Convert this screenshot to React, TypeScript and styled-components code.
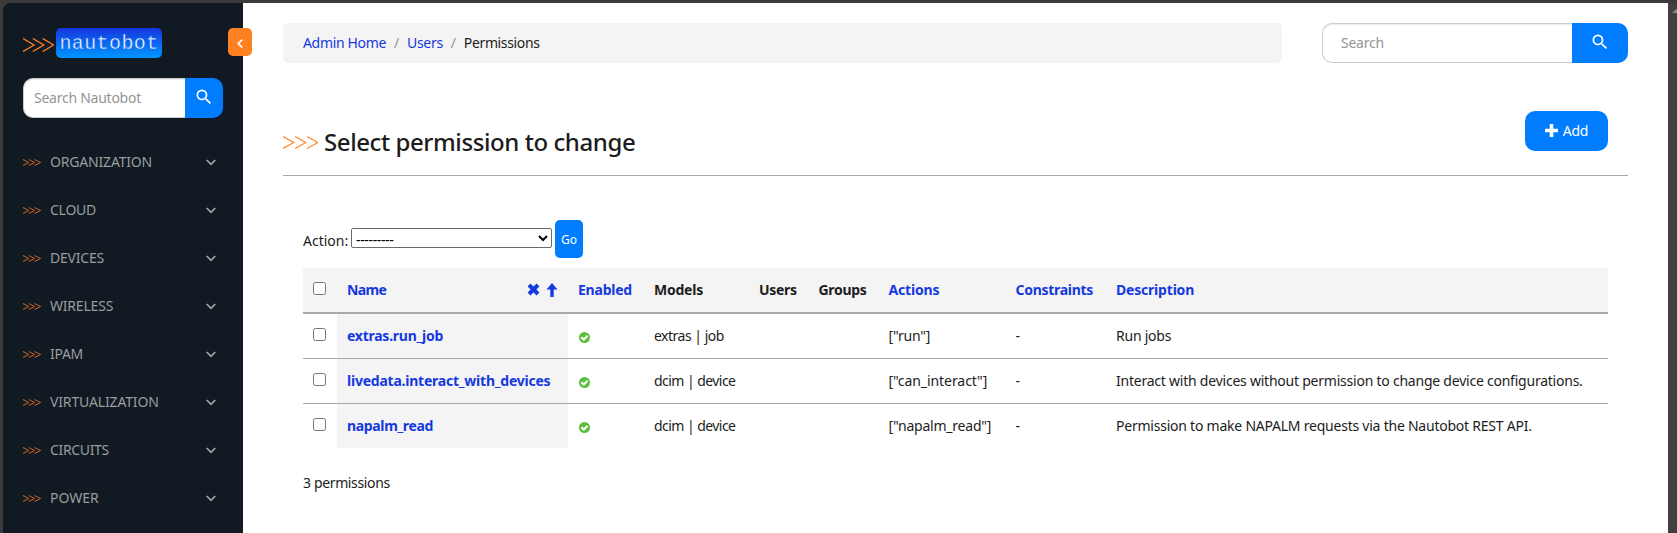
import React from "react";
import styled, { createGlobalStyle } from "styled-components";

const Global = createGlobalStyle`
  * { box-sizing: border-box; }
  body { margin: 0; background: #3b3b3b; overflow: hidden; }
  body, input, select, button { font-family: "Noto Sans", "Liberation Sans", sans-serif; font-size: 14px; }
`;

const BLUE = "#007dff";
const LINK = "#1539e0";
const ORANGE = "#ff8021";
const LINE = "#a9a9a9";

const Window = styled.div`
  display: flex;
  width: 1677px;
  height: 533px;
  padding: 3px 0 0 3px;
  background: #3b3b3b;
  color: #1c1c1c;
  line-height: 20px;
`;

const T = styled.span<{ $ls?: number }>`
  letter-spacing: ${(p) => p.$ls ?? -0.2}px;
  white-space: nowrap;
`;

const Sidebar = styled.aside`
  position: relative;
  flex: none;
  width: 240px;
  padding: 25px 20px 0;
  background: #111923;
  border-top-left-radius: 8px;
`;

const Logo = styled.div`
  display: flex;
  align-items: center;
  height: 30px;
  gap: 2px;
  margin-bottom: 20px;
`;

const LogoName = styled.span`
  width: 106px;
  height: 30px;
  padding-top: 1px;
  border-radius: 5px;
  background: linear-gradient(#1635de, #0097ff);
  color: #eef5ff;
  font: 20px/30px "Liberation Mono", monospace;
  letter-spacing: 0.4px;
  text-align: center;
  -webkit-text-stroke: 0.35px #0a68f0;
`;

const Collapse = styled.button`
  position: absolute;
  left: 225px;
  top: 25px;
  width: 24px;
  height: 28px;
  padding: 2px 0 0;
  border: 0;
  border-radius: 5px;
  background: ${ORANGE};
  display: flex;
  align-items: center;
  justify-content: center;
`;

const SearchForm = styled.form<{ $width: number }>`
  display: flex;
  flex: none;
  width: ${(p) => p.$width}px;
  height: 40px;
`;

const SearchInput = styled.input<{ $indent: number }>`
  flex: 1;
  min-width: 0;
  padding: 0 0 1px ${(p) => p.$indent}px;
  border: 1px solid #ccc;
  border-right: 0;
  border-radius: 10px 0 0 10px;
  box-shadow: inset 0 1px 1px rgba(0, 0, 0, 0.075);
  background: #fff;
  outline: 0;
  letter-spacing: -0.25px;
  &::placeholder { color: #949494; opacity: 1; }
`;

const SearchButton = styled.button<{ $width: number }>`
  display: flex;
  align-items: center;
  justify-content: center;
  width: ${(p) => p.$width}px;
  padding: 0 0 2px;
  border: 0;
  border-radius: 0 10px 10px 0;
  background: ${BLUE};
`;

const Nav = styled.nav`
  margin-top: 20px;
`;

const NavItem = styled.div`
  display: flex;
  align-items: center;
  height: 48px;
  padding-right: 7px;
  color: #9b9c9d;
`;

const NavLabel = styled(T)`
  flex: 1;
  margin-left: 9px;
`;

const Main = styled.main`
  flex: 1;
  min-width: 0;
  padding: 20px 40px 0;
  background: #fff;
`;

const TopBar = styled.div`
  display: flex;
  justify-content: space-between;
`;

const Breadcrumb = styled.nav`
  display: flex;
  align-items: center;
  width: 999px;
  height: 40px;
  padding-left: 20px;
  border-radius: 5px;
  background: #f4f4f4;
`;

const Slash = styled.span`
  width: 21px;
  text-align: center;
  color: #949494;
`;

const Link = styled(T)`
  color: ${LINK};
`;

const Heading = styled.header`
  display: flex;
  align-items: flex-start;
  justify-content: space-between;
  height: 113px;
  padding: 48px 20px 0 0;
  border-bottom: 1px solid ${LINE};
`;

const Title = styled.h1`
  display: flex;
  align-items: center;
  gap: 6px;
  margin: 15px 0 0;
  font-size: 24px;
  font-weight: 500;
  line-height: 32px;
`;

const AddButton = styled.button`
  display: flex;
  align-items: center;
  justify-content: center;
  gap: 5px;
  width: 83px;
  height: 40px;
  padding: 0 0 1px;
  border: 0;
  border-radius: 10px;
  background: ${BLUE};
  color: #fff;
`;

const Content = styled.section`
  padding: 44px 20px 0;
`;

const ActionBar = styled.div`
  display: flex;
  height: 48px;
`;

const ActionLabel = styled(T)`
  width: 48px;
  padding-top: 11px;
`;

const ActionSelect = styled.select`
  width: 201px;
  height: 20px;
  margin: 8px 3px 0 0;
  padding: 0;
  border: 1px solid #6b6b6b;
  border-radius: 2px;
  background: #fff;
  color: #000;
  letter-spacing: -0.35px;
`;

const GoButton = styled.button`
  width: 28px;
  height: 38px;
  padding: 0;
  border: 0;
  border-radius: 5px;
  background: ${BLUE};
  color: #fff;
  font-size: 12px;
`;

const Table = styled.div`
  display: grid;
  grid-template-columns: 34px 231px 76px 105px 59.5px 70px 127px 100.5px 502px;
`;

const Row = styled.div<{ $head?: boolean }>`
  display: grid;
  grid-column: 1 / -1;
  grid-template-columns: subgrid;
  height: ${(p) => (p.$head ? 46 : 45)}px;
  border-bottom: ${(p) => (p.$head ? 2 : 1)}px solid ${LINE};
  background: ${(p) => (p.$head ? "#f4f4f4" : "#fff")};
  font-weight: ${(p) => (p.$head ? 700 : 400)};
  &:last-child { height: 44px; border-bottom: 0; }
`;

const Cell = styled.div`
  display: flex;
  align-items: center;
  padding-left: 10px;
`;

const NameCell = styled(Cell)`
  background: #f4f4f4;
  font-weight: 700;
`;

const SortIcons = styled.span`
  display: flex;
  align-items: center;
  gap: 6px;
  margin: 0 10px 1px auto;
`;

const Check = styled.input.attrs({ type: "checkbox" })`
  width: 13px;
  height: 13px;
  margin: 0 0 3px;
`;

const Enabled = styled.svg`
  margin: 3px 0 0 1px;
`;

const Count = styled.div`
  padding-top: 25px;
`;

const Scrollbar = styled.div`
  display: flex;
  flex: none;
  width: 9px;
  padding: 6px 0 0 4px;
  background: #404040;
`;

const PromptSvg = styled.svg<{ $drop?: number }>`
  flex: none;
  margin-top: ${(p) => p.$drop ?? 0}px;
  fill: none;
  stroke: ${ORANGE};
`;

type PromptProps = { step: number; arm: number; height: number; stroke: number; drop?: number };

function Prompt({ step, arm, height, stroke, drop }: PromptProps) {
  const d = [0, 1, 2]
    .map((i) => `M${i * step} .5L${i * step + arm} ${height / 2}L${i * step} ${height - 0.5}`)
    .join("");
  return (
    <PromptSvg $drop={drop} width={Math.ceil(step * 2 + arm)} height={height} strokeWidth={stroke}>
      <path d={d} />
    </PromptSvg>
  );
}

function Magnifier() {
  return (
    <svg width="20" height="20" viewBox="0 0 24 24" fill="#fff">
      <path d="M9.5 3A6.5 6.5 0 0 1 16 9.5c0 1.61-.59 3.09-1.56 4.23l.27.27h.79l5 5-1.5 1.5-5-5v-.79l-.27-.27A6.516 6.516 0 0 1 9.5 16a6.5 6.5 0 0 1 0-13m0 2C7 5 5 7 5 9.5S7 14 9.5 14 14 12 14 9.5 12 5 9.5 5Z" />
    </svg>
  );
}

const NAV: [string, number][] = [
  ["ORGANIZATION", -0.18],
  ["CLOUD", -0.25],
  ["DEVICES", -0.2],
  ["WIRELESS", -0.2],
  ["IPAM", -0.3],
  ["VIRTUALIZATION", -0.15],
  ["CIRCUITS", -0.35],
  ["POWER", 0],
];

const ROWS = [
  { name: "extras.run_job", nls: -0.25, model: "extras | job", mls: -0.5, action: '["run"]', als: -0.22, desc: "Run jobs" },
  {
    name: "livedata.interact_with_devices", nls: -0.23, model: "dcim | device", mls: -0.55,
    action: '["can_interact"]', als: -0.07,
    desc: "Interact with devices without permission to change device configurations.",
  },
  {
    name: "napalm_read", nls: -0.35, model: "dcim | device", mls: -0.55,
    action: '["napalm_read"]', als: -0.22,
    desc: "Permission to make NAPALM requests via the Nautobot REST API.",
  },
];

export default function App() {
  return (
    <Window>
      <Global />
      <Sidebar>
        <Logo>
          <Prompt step={9.8} arm={11} height={14} stroke={1.3} drop={3} />
          <LogoName>nautobot</LogoName>
        </Logo>
        <Collapse>
          <svg width="6" height="9" fill="none" stroke="#fff" strokeWidth="1.7">
            <path d="M5.2 .7L1.3 4.500L5.2 8.3" />
          </svg>
        </Collapse>
        <SearchForm $width={200}>
          <SearchInput $indent={10} placeholder="Search Nautobot" />
          <SearchButton $width={38} type="button"><Magnifier /></SearchButton>
        </SearchForm>
        <Nav>
          {NAV.map(([label, ls]) => (
            <NavItem key={label}>
              <Prompt step={5.8} arm={5.9} height={7} stroke={0.8} />
              <NavLabel $ls={ls}>{label}</NavLabel>
              <svg width="10" height="7" fill="none" stroke="#a7a8a9" strokeWidth="1.6">
                <path d="M.7 1L5 5.3L9.3 1" />
              </svg>
            </NavItem>
          ))}
        </Nav>
      </Sidebar>
      <Main>
        <TopBar>
          <Breadcrumb>
            <Link $ls={-0.34}>Admin Home</Link>
            <Slash>/</Slash>
            <Link $ls={-0.3}>Users</Link>
            <Slash>/</Slash>
            <T $ls={-0.36}>Permissions</T>
          </Breadcrumb>
          <SearchForm $width={306}>
            <SearchInput $indent={18} placeholder="Search" />
            <SearchButton $width={56} type="button"><Magnifier /></SearchButton>
          </SearchForm>
        </TopBar>
        <Heading>
          <Title>
            <Prompt step={12} arm={10.8} height={13} stroke={1.1} />
            <T $ls={-0.42}>Select permission to change</T>
          </Title>
          <AddButton>
            <svg width="13" height="13" fill="#fff"><path d="M4.7 0h3.6v4.7H13v3.6H8.3V13H4.7V8.3H0V4.7h4.7z" /></svg>
            <T>Add</T>
          </AddButton>
        </Heading>
        <Content>
          <ActionBar>
            <ActionLabel $ls={0}>Action:</ActionLabel>
            <ActionSelect><option>---------</option></ActionSelect>
            <GoButton>Go</GoButton>
          </ActionBar>
          <Table>
            <Row $head>
              <Cell><Check /></Cell>
              <Cell>
                <Link $ls={-0.6}>Name</Link>
                <SortIcons>
                  <svg width="13" height="13" stroke={LINK} strokeWidth="4"><path d="M2 2L11 11M11 2L2 11" /></svg>
                  <svg width="12" height="14" fill={LINK}><path d="M6 0L11.5 6.5H7.7V14H4.3V6.5H.5z" /></svg>
                </SortIcons>
              </Cell>
              <Cell><Link $ls={-0.23}>Enabled</Link></Cell>
              <Cell><T $ls={-0.23}>Models</T></Cell>
              <Cell><T $ls={-0.3}>Users</T></Cell>
              <Cell><T $ls={-0.3}>Groups</T></Cell>
              <Cell><Link $ls={-0.16}>Actions</Link></Cell>
              <Cell><Link $ls={-0.28}>Constraints</Link></Cell>
              <Cell><Link $ls={-0.2}>Description</Link></Cell>
            </Row>
            {ROWS.map((r) => (
              <Row key={r.name}>
                <Cell><Check /></Cell>
                <NameCell><Link $ls={r.nls}>{r.name}</Link></NameCell>
                <Cell>
                  <Enabled width="11" height="11" viewBox="0 0 11 11">
                    <circle cx="5.5" cy="5.5" r="5.5" fill="#5bbf3c" />
                    <path d="M2.4 5.3L4.8 7.5L8.6 3.8" fill="none" stroke="#fff" strokeWidth="2" />
                  </Enabled>
                </Cell>
                <Cell><T $ls={r.mls}>{r.model}</T></Cell>
                <Cell />
                <Cell />
                <Cell><T $ls={r.als}>{r.action}</T></Cell>
                <Cell><T>-</T></Cell>
                <Cell><T $ls={-0.23}>{r.desc}</T></Cell>
              </Row>
            ))}
          </Table>
          <Count><T $ls={-0.36}>3 permissions</T></Count>
        </Content>
      </Main>
      <Scrollbar>
        <svg width="5" height="4" fill="#8a8a8a"><path d="M0 4L4.5 0L9 4z" /></svg>
      </Scrollbar>
    </Window>
  );
}
